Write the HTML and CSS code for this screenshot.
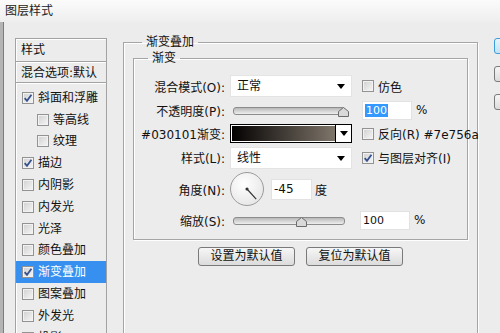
FILE: index.html
```html
<!DOCTYPE html>
<html lang="zh-CN">
<head>
<meta charset="UTF-8">
<title>图层样式</title>
<link rel="stylesheet" href="styles.css">
</head>
<body>
<div class="window">
	<div class="titlebar">图层样式</div>

	<div class="frame">
		<!-- style list on the left -->
		<div class="stylelist">
			<div class="list-head">样式</div>
			<div class="list-blend">混合选项:默认</div>
			<div class="items">
				<div class="item"><span class="cb on"><svg viewBox="0 0 9 9"><path d="M1.5 4.6 L3.6 7 L7.6 1.6"/></svg></span>斜面和浮雕</div>
				<div class="item sub"><span class="cb"></span>等高线</div>
				<div class="item sub"><span class="cb"></span>纹理</div>
				<div class="item"><span class="cb on"><svg viewBox="0 0 9 9"><path d="M1.5 4.6 L3.6 7 L7.6 1.6"/></svg></span>描边</div>
				<div class="item"><span class="cb"></span>内阴影</div>
				<div class="item"><span class="cb"></span>内发光</div>
				<div class="item"><span class="cb"></span>光泽</div>
				<div class="item"><span class="cb"></span>颜色叠加</div>
				<div class="item sel"><span class="cb on"><svg viewBox="0 0 9 9"><path d="M1.5 4.6 L3.6 7 L7.6 1.6"/></svg></span>渐变叠加</div>
				<div class="item"><span class="cb"></span>图案叠加</div>
				<div class="item"><span class="cb"></span>外发光</div>
				<div class="item"><span class="cb"></span>投影</div>
			</div>
		</div>

		<!-- settings -->
		<fieldset class="group outer">
			<legend>渐变叠加</legend>
			<fieldset class="group inner">
				<legend>渐变</legend>
				<div class="form">
					<div class="lbl">混合模式(O):</div>
					<div class="select">正常<span class="arrow"></span></div>
					<div class="extra"><span class="cb"></span>仿色</div>

					<div class="lbl">不透明度(P):</div>
					<div class="slider"><span class="thumb" style="left: 98%"><svg viewBox="0 0 11 10"><polygon points="0.5,4.5 5.5,0.5 10.5,4.5 10.5,9.5 0.5,9.5"/></svg></span></div>
					<div class="extra"><span class="num"><span class="hl">100</span></span><span class="pct">%</span></div>

					<div class="lbl">#030101渐变:</div>
					<div class="gradient"><span class="ramp"></span><span class="gbtn"><span class="arrow"></span></span></div>
					<div class="extra"><span class="cb"></span>反向(R) #7e756a</div>

					<div class="lbl">样式(L):</div>
					<div class="select">线性<span class="arrow"></span></div>
					<div class="extra"><span class="cb on"><svg viewBox="0 0 9 9"><path d="M1.5 4.6 L3.6 7 L7.6 1.6"/></svg></span>与图层对齐(I)</div>

					<div class="lbl">角度(N):</div>
					<div class="angle">
						<span class="dial"><svg viewBox="0 0 33 33"><circle cx="16.5" cy="16.5" r="1.6"/><line x1="16.5" y1="16.5" x2="26" y2="27"/></svg></span>
						<span class="num deg">-45</span>
						<span class="unit">度</span>
					</div>
					<div></div>

					<div class="lbl">缩放(S):</div>
					<div class="slider"><span class="thumb" style="left: 61%"><svg viewBox="0 0 11 10"><polygon points="0.5,4.5 5.5,0.5 10.5,4.5 10.5,9.5 0.5,9.5"/></svg></span></div>
					<div class="extra tight"><span class="num">100</span><span class="pct">%</span></div>
				</div>
			</fieldset>
			<div class="buttons">
				<button>设置为默认值</button>
				<button>复位为默认值</button>
			</div>
		</fieldset>

		<div class="sidebtns">
			<span class="sbtn def"></span>
			<span class="sbtn"></span>
			<span class="sbtn"></span>
		</div>
	</div>
</div>
</body>
</html>
```

FILE: styles.css
```css
* {
	box-sizing: border-box;
	margin: 0;
	padding: 0;
}

body {
	width: 500px;
	height: 333px;
	overflow: hidden;
	background: #ececec;
	color: #111;
	font: 12px "DejaVu Sans", "Noto Sans CJK SC", sans-serif;
}

.titlebar {
	height: 22px;
	padding: 3px 0 0 5px;
	background: linear-gradient(#fbfbfb, #eeeeee);
	color: #222;
	line-height: 16px;
}

.frame {
	display: flex;
	align-items: flex-start;
	height: 311px;
	overflow: hidden;
	border-left: 3px solid #b4b4b4;
	box-shadow: inset 1px 0 0 #7d7d7d;
}

/* left list */

.stylelist {
	flex: none;
	width: 92px;
	height: 305px;
	margin: 16px 0 0 12px;
	border: 1px solid #a2a2a2;
	box-shadow: inset 1px 1px 0 #fff;
	white-space: nowrap;
}

.list-head {
	height: 23px;
	padding: 3px 0 0 5px;
	border-bottom: 1px solid #a2a2a2;
	box-shadow: 0 1px 0 #fff;
	line-height: 16px;
}

.list-blend {
	height: 20px;
	margin-top: 1px;
	padding: 2px 0 0 5px;
	border-bottom: 1px solid #a2a2a2;
	box-shadow: 0 1px 0 #fff;
	line-height: 16px;
}

.items {
	padding-top: 4px;
}

.item {
	display: flex;
	align-items: center;
	height: 21.8px;
	padding-left: 6px;
	line-height: 16px;
}

.item.sub {
	padding-left: 21px;
}

.item.sel {
	background: #3790f0;
	color: #fff;
}

.cb {
	display: inline-block;
	flex: none;
	width: 12px;
	height: 12px;
	margin-right: 4px;
	border: 1px solid #939393;
	background: linear-gradient(135deg, #d0d0d0, #f6f6f6);
	box-shadow: inset 0 0 0 1px #f2f2f2;
}

.cb svg {
	display: block;
	width: 10px;
	height: 10px;
}

.cb path {
	fill: none;
	stroke: #34508e;
	stroke-width: 1.6;
}

/* group boxes */

.group {
	min-width: 0;
	border: 1px solid #a5a5a5;
	box-shadow: inset 1px 1px 0 #fff, 1px 1px 0 #fff;
}

.group legend {
	padding: 0 4px;
	line-height: 16px;
}

.outer {
	flex: none;
	width: 355px;
	height: 310px;
	margin: 12px 0 0 16px;
	padding: 0;
}

.outer > legend {
	margin-left: 18px;
}

.inner {
	margin: 0 9px;
	padding: 9px 0 9px 0;
}

.inner > legend {
	margin-left: 14px;
}

.form {
	display: grid;
	grid-template-columns: 91px 122px 0;
	grid-template-rows: 22px 20px 21px 21px 36px 20px;
	column-gap: 5px;
	row-gap: 3px;
	align-items: center;
}

.lbl {
	display: flex;
	justify-content: flex-end;
	white-space: nowrap;
}

.extra {
	display: flex;
	align-items: center;
	margin-left: 5px;
	white-space: nowrap;
}

.extra.tight {
	margin-left: 3px;
}

.select {
	position: relative;
	height: 22px;
	padding: 2px 0 0 6px;
	background: #fff;
	border: 1px solid #e4e4e4;
	line-height: 16px;
}

.select .arrow {
	position: absolute;
	right: 6px;
	top: 8px;
}

.arrow {
	display: block;
	width: 0;
	height: 0;
	border-left: 4px solid transparent;
	border-right: 4px solid transparent;
	border-top: 5px solid #000;
}

.slider {
	position: relative;
	height: 20px;
	margin: 0 7px 0 3px;
}

.slider::before {
	content: "";
	display: block;
	height: 6px;
	margin-top: 7px;
	border: 1px solid #8c8c8c;
	border-radius: 3px;
	background: linear-gradient(#b9b9b9, #eeeeee);
}

.thumb {
	position: absolute;
	top: 7px;
	width: 11px;
	height: 10px;
	margin-left: -5px;
}

.thumb svg {
	display: block;
	width: 11px;
	height: 10px;
}

.thumb polygon {
	fill: #d9d9d9;
	stroke: #6b6b6b;
	stroke-width: 1;
}

.num {
	display: inline-block;
	flex: none;
	width: 50px;
	height: 19px;
	padding: 1px 0 0 2px;
	background: #fff;
	border: 1px solid #e2e2e2;
	font-size: 11px;
	line-height: 15px;
}

.hl {
	background: #3399ff;
	color: #fff;
	padding: 0 1px;
}

.pct {
	margin-left: 4px;
}

.gradient {
	display: flex;
	height: 19px;
	border: 1px solid #000;
	background: #fff;
}

.ramp {
	flex: 1;
	margin: 1px 0 1px 1px;
	background: linear-gradient(to right, #030101, #7e756a);
}

.gbtn {
	display: flex;
	align-items: center;
	justify-content: center;
	width: 16px;
	border-left: 1px solid #000;
	background: #fff;
}

.angle {
	display: flex;
	align-items: center;
	white-space: nowrap;
}

.dial {
	display: block;
	flex: none;
	width: 34px;
	height: 34px;
	border: 1px solid #9b9b9b;
	border-radius: 50%;
	background: radial-gradient(circle at 40% 35%, #ffffff, #e0e0e0);
}

.dial svg {
	display: block;
	width: 32px;
	height: 32px;
}

.dial circle {
	fill: #333;
}

.dial line {
	stroke: #333;
	stroke-width: 1.2;
}

.num.deg {
	width: 41px;
	height: 21px;
	margin-left: 7px;
	font-size: 12px;
	padding-top: 2px;
}

.unit {
	margin-left: 3px;
}

.buttons {
	display: flex;
	justify-content: center;
	gap: 11px;
	margin-top: 7px;
}

button {
	width: 97px;
	height: 19px;
	border: 1px solid #7a7a7a;
	border-radius: 3px;
	background: linear-gradient(#f6f6f6, #dcdcdc);
	color: #111;
	font: 12px "DejaVu Sans", "Noto Sans CJK SC", sans-serif;
	line-height: 15px;
}

.sidebtns {
	flex: none;
	display: flex;
	flex-direction: column;
	gap: 12px;
	margin: 16px 0 0 16px;
}

.sbtn {
	display: block;
	width: 20px;
	height: 16px;
	border: 1px solid #7a7a7a;
	border-radius: 3px;
	background: linear-gradient(#f6f6f6, #dcdcdc);
}

.sbtn.def {
	border-color: #3c9ed9;
	background: linear-gradient(#e6f4fc, #c2e3f6);
}
```
